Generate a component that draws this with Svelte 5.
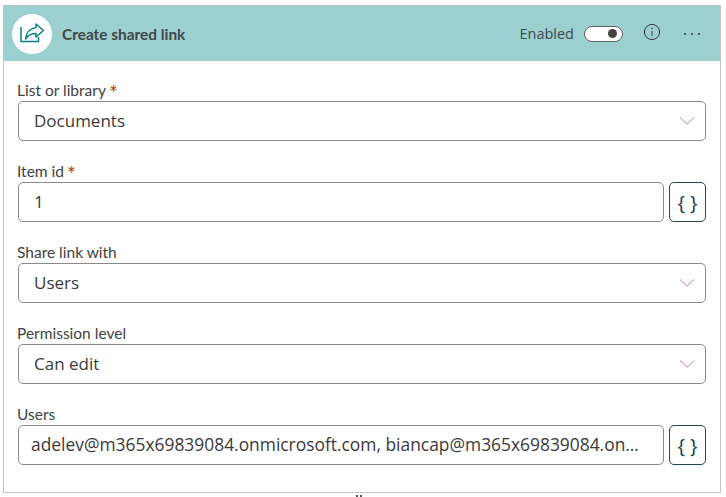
<script>
	const fields = [
		{ label: 'List or library', required: true, value: 'Documents', kind: 'select' },
		{ label: 'Item id', required: true, value: '1', kind: 'dynamic' },
		{ label: 'Share link with', value: 'Users', kind: 'select' },
		{ label: 'Permission level', value: 'Can edit', kind: 'select' },
		{ label: 'Users', value: 'adelev@m365x69839084.onmicrosoft.com, biancap@m365x69839084.onmicrosoft.com', kind: 'dynamic', small: true }
	];
</script>

<div class="page">
	<div class="card">
		<header>
			<div class="badge">
				<svg width="26" height="26" viewBox="0 0 26 26" fill="none" stroke="#0f7f80" stroke-width="1.5">
					<path d="M2 6 L2 20.5 L19.5 20.5 L19.5 16" />
					<path d="M17 3 L24.5 9.5 L17 16 L17 12.5 C12.5 12.5 9 14 6.5 18 C7 12 11 7.5 17 6.5 Z" stroke-linejoin="round" />
				</svg>
			</div>
			<h1>Create shared link</h1>
			<div class="actions">
				<span class="enabled">Enabled</span>
				<div class="toggle"><span class="knob"></span></div>
				<svg class="info" width="18" height="18" viewBox="0 0 18 18" fill="none" stroke="#3b3a39">
					<circle cx="9" cy="9" r="7.6" />
					<path d="M9 8 L9 13" />
					<circle cx="9" cy="5.6" r="0.5" fill="#3b3a39" stroke-width="0.5" />
				</svg>
				<div class="dots"><span></span><span></span><span></span></div>
			</div>
		</header>

		<div class="form">
			{#each fields as f}
				<div class="field">
					<div class="label">{f.label}{#if f.required}<span class="req">*</span>{/if}</div>
					<div class="row">
						<div class="input" class:small={f.small}>
							<span class="value">{f.value}</span>
							{#if f.kind === 'select'}
								<svg width="16" height="8" viewBox="0 0 16 8" fill="none" stroke="#a97fb5">
									<path d="M1 0.5 L8 7.2 L15 0.5" />
								</svg>
							{/if}
						</div>
						{#if f.kind === 'dynamic'}
							<div class="fx"><span class="brace">{'{ }'}</span></div>
						{/if}
					</div>
				</div>
			{/each}
		</div>
	</div>
	<div class="peek"><span></span><span></span></div>
</div>

<style>
	:global(body) {
		background: #fff;
	}

	.page {
		width: 726px;
		height: 497px;
		padding: 5px 5px 0 3px;
		box-sizing: border-box;
		overflow: hidden;
	}

	.card {
		height: 488px;
		box-sizing: border-box;
		border: 1px solid #c4c4c4;
		border-top-color: #bdbdbd;
	}

	header {
		display: flex;
		align-items: center;
		height: 55px;
		background: #9ccfd0;
		padding: 0 0 0 8px;
	}

	.badge {
		width: 40px;
		height: 40px;
		border-radius: 50%;
		background: #fff;
		display: flex;
		align-items: center;
		justify-content: center;
	}

	h1 {
		margin: 0 0 0 10px;
		font: 700 15.4px "Lato", sans-serif;
		color: #3f4747;
	}

	.actions {
		margin-left: auto;
		display: flex;
		align-items: center;
		padding-right: 20px;
	}

	.enabled {
		font: 400 14.5px "Open Sans", sans-serif;
		color: #3f4a4f;
	}

	.toggle {
		width: 39px;
		height: 16px;
		margin-left: 10px;
		border: 1px solid #616161;
		border-radius: 9px;
		background: #fff;
		display: flex;
		align-items: center;
		justify-content: flex-end;
		padding-right: 5px;
		box-sizing: border-box;
	}

	.knob {
		width: 9px;
		height: 9px;
		border-radius: 50%;
		background: #424242;
	}

	.info {
		margin-left: 20px;
		margin-top: -3px;
	}

	.dots {
		display: flex;
		gap: 5px;
		margin-left: 23px;
	}

	.dots span {
		width: 2px;
		height: 2px;
		background: #3b3a39;
		border-radius: 50%;
	}

	.form {
		padding: 19px 14px 0 13px;
		display: flex;
		flex-direction: column;
		gap: 20px;
	}

	.label {
		font: 400 15.5px/20px "Lato", sans-serif;
		color: #424242;
		height: 21px;
	}

	.req {
		margin-left: 3px;
		font-size: 21px;
		line-height: 0;
		vertical-align: -5px;
		color: #b4460f;
	}

	.row {
		display: flex;
		gap: 5px;
		margin-left: 1px;
	}

	.input {
		flex: 1;
		min-width: 0;
		height: 40px;
		box-sizing: border-box;
		border: 1px solid #8a8a8a;
		border-radius: 5px;
		display: flex;
		align-items: center;
		justify-content: space-between;
		padding: 0 10px 0 15px;
		font: 400 17px "Open Sans", sans-serif;
		color: #3b3a39;
	}

	.input.small {
		padding-left: 12px;
		padding-right: 20px;
		font-size: 17.4px;
	}

	.value {
		margin-bottom: 2px;
		white-space: nowrap;
		overflow: hidden;
		text-overflow: ellipsis;
	}

	.fx {
		width: 37px;
		height: 40px;
		flex: none;
		box-sizing: border-box;
		border: 1px solid #1f4a4f;
		border-radius: 5px;
		display: flex;
		align-items: center;
		justify-content: center;
		font: 400 20px "Open Sans", sans-serif;
		color: #1a4050;
	}

	.peek {
		display: flex;
		justify-content: center;
		gap: 2px;
		margin-top: 2px;
		padding-right: 7px;
	}

	.peek span {
		width: 2px;
		height: 2px;
		background: #555;
	}
</style>
